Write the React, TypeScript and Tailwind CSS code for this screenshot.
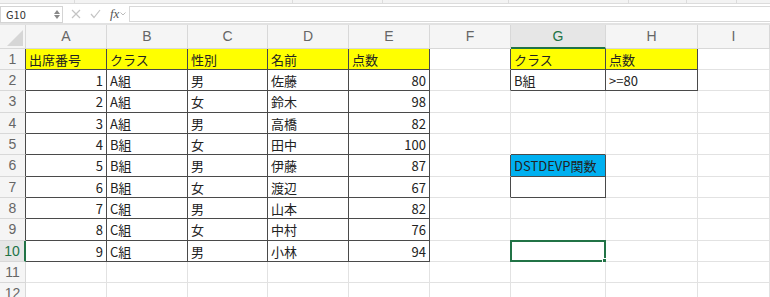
import React from 'react';

const COLS = ['A', 'B', 'C', 'D', 'E', 'F', 'G', 'H', 'I'];
const ROW_H = [21, 21, 22, 21, 21, 22, 21, 21, 22, 21, 21, 22];

type Cell = { v?: string | number; bg?: string; right?: boolean };

const table: (string | number)[][] = [
  ['出席番号', 'クラス', '性別', '名前', '点数'],
  [1, 'A組', '男', '佐藤', 80],
  [2, 'A組', '女', '鈴木', 98],
  [3, 'A組', '男', '高橋', 82],
  [4, 'B組', '女', '田中', 100],
  [5, 'B組', '男', '伊藤', 87],
  [6, 'B組', '女', '渡辺', 67],
  [7, 'C組', '男', '山本', 82],
  [8, 'C組', '女', '中村', 76],
  [9, 'C組', '男', '小林', 94],
];

// r: 1-based row, c: 0-based col
function getCell(r: number, c: number): Cell {
  if (r <= 10 && c <= 4) {
    const v = table[r - 1][c];
    return { v, bg: r === 1 ? 'yellow' : undefined, right: typeof v === 'number' };
  }
  if (r === 1 && c === 6) return { v: 'クラス', bg: 'yellow' };
  if (r === 1 && c === 7) return { v: '点数', bg: 'yellow' };
  if (r === 2 && c === 6) return { v: 'B組' };
  if (r === 2 && c === 7) return { v: '>=80' };
  if (r === 6 && c === 6) return { v: 'DSTDEVP関数', bg: 'blue' };
  return {};
}

function boxed(r: number, c: number) {
  if (r >= 1 && r <= 10 && c >= 0 && c <= 4) return true;
  if (r >= 1 && r <= 2 && (c === 6 || c === 7)) return true;
  if (r >= 6 && r <= 7 && c === 6) return true;
  return false;
}

function GridCell({ r, c }: { r: number; c: number }) {
  const cell = getCell(r, c);
  const darkR = boxed(r, c) || boxed(r, c + 1);
  const darkB = boxed(r, c) || boxed(r + 1, c);
  const selected = r === 10 && c === 6;
  return (
    <div
      className={[
        'relative flex items-center px-[3px] border-r border-b overflow-visible whitespace-nowrap',
        darkR ? 'border-r-[#4a4a4a]' : 'border-r-[#e2e2e2]',
        darkB ? 'border-b-[#4a4a4a]' : 'border-b-[#e2e2e2]',
        cell.bg === 'yellow' ? 'bg-[#ffff00]' : cell.bg === 'blue' ? 'bg-[#00b0f0]' : 'bg-white',
        cell.right ? 'justify-end' : 'justify-start',
      ].join(' ')}
    >
      {cell.v !== undefined && <span className="leading-none">{cell.v}</span>}
      {selected && (
        <div className="absolute -left-px -top-px -right-px -bottom-px border-2 border-[#217346]">
          <div className="absolute -right-[4px] -bottom-[4px] w-[6px] h-[6px] bg-[#217346] border border-white" />
        </div>
      )}
    </div>
  );
}

export default function App() {
  return (
    <div
      className="w-[770px] h-[297px] overflow-hidden bg-white text-[13px] text-[#222]"
      style={{ fontFamily: '"Noto Sans CJK JP", "Noto Sans", sans-serif' }}
    >
      {/* ribbon edge */}
      <div className="h-[4px] bg-[#f3f3f3] border-b border-[#dcdcdc] flex">
        <div className="w-[75px] border-r border-[#dcdcdc]" />
        <div className="w-[218px] border-r border-[#dcdcdc]" />
        <div className="w-[90px] border-r border-[#dcdcdc]" />
        <div className="w-[126px] border-r border-[#dcdcdc]" />
        <div className="w-[120px] border-r border-[#dcdcdc]" />
        <div className="w-[58px] border-r border-[#dcdcdc]" />
        <div className="w-[50px] border-r border-[#dcdcdc]" />
      </div>

      {/* formula bar */}
      <div className="h-[19px] flex items-center pt-[1px]">
        <div className="w-[63px] h-[17px] border border-[#d4d4d4] flex items-center justify-between pl-[5px] pr-[2px] text-[11px] text-[#333]">
          <span>G10</span>
          <div className="flex flex-col items-center leading-none">
            <svg width="6" height="4" viewBox="0 0 6 4"><path d="M0 4 L3 0 L6 4 Z" fill="#888" /></svg>
            <svg width="6" height="4" viewBox="0 0 6 4" className="mt-[1px]"><path d="M0 0 L3 4 L6 0 Z" fill="#888" /></svg>
          </div>
        </div>
        <div className="flex items-center w-[66px] pl-[8px] gap-[9px]">
          <svg width="10" height="10" viewBox="0 0 10 10"><path d="M1 1 L9 9 M9 1 L1 9" stroke="#c4c4c4" strokeWidth="1.2" /></svg>
          <svg width="11" height="10" viewBox="0 0 11 10"><path d="M1 5 L4 8.5 L10 1" stroke="#c4c4c4" strokeWidth="1.2" fill="none" /></svg>
          <div className="flex items-center gap-[1px]">
            <span className="italic text-[13px] text-[#555]" style={{ fontFamily: '"Liberation Serif", serif' }}>fx</span>
            <svg width="6" height="4" viewBox="0 0 6 4"><path d="M0.5 0.5 L3 3 L5.5 0.5" stroke="#aaa" strokeWidth="0.8" fill="none" /></svg>
          </div>
        </div>
        <div className="flex-1 h-[16px] border border-[#d9d9d9] border-r-0" />
      </div>
      <div className="h-[2px] border-t border-b border-[#e2e2e2]" />

      {/* sheet */}
      <div
        className="grid"
        style={{
          gridTemplateColumns: '26px 81px 81px 80px 81px 81px 81px 95px 92px 1fr',
          gridTemplateRows: ['24px', ...ROW_H.map((h) => `${h}px`)].join(' '),
        }}
      >
        <div className="relative bg-[#f5f5f5] border-r border-b border-[#d8d8d8]">
          <div
            className="absolute right-[2px] bottom-[2px] w-[16px] h-[16px] bg-[#d6d6d6]"
            style={{ clipPath: 'polygon(100% 0, 100% 100%, 0 100%)' }}
          />
        </div>
        {COLS.map((col, i) => (
          <div
            key={col}
            className={
              i === 6
                ? 'flex items-center justify-center bg-[#e6e6e6] border-r border-[#d8d8d8] border-b-2 border-b-[#217346] text-[14px] text-[#217346]'
                : 'flex items-center justify-center bg-[#f5f5f5] border-r border-b border-[#d8d8d8] text-[14px] text-[#666]'
            }
            style={{ fontFamily: '"Liberation Sans", sans-serif' }}
          >
            {col}
          </div>
        ))}

        {ROW_H.map((_, ri) => {
          const r = ri + 1;
          return (
            <React.Fragment key={r}>
              <div
                className={
                  r === 10
                    ? 'flex items-center justify-center bg-[#e6e6e6] border-r-2 border-r-[#217346] border-b border-b-[#d8d8d8] text-[14px] text-[#217346]'
                    : r <= 10
                    ? 'flex items-center justify-center bg-[#f5f5f5] border-r border-r-[#4a4a4a] border-b border-b-[#d8d8d8] text-[14px] text-[#666]'
                    : 'flex items-center justify-center bg-[#f5f5f5] border-r border-r-[#d8d8d8] border-b border-b-[#d8d8d8] text-[14px] text-[#666]'
                }
                style={{ fontFamily: '"Liberation Sans", sans-serif' }}
              >
                {r}
              </div>
              {COLS.map((_, c) => (
                <GridCell key={c} r={r} c={c} />
              ))}
            </React.Fragment>
          );
        })}
      </div>
    </div>
  );
}
